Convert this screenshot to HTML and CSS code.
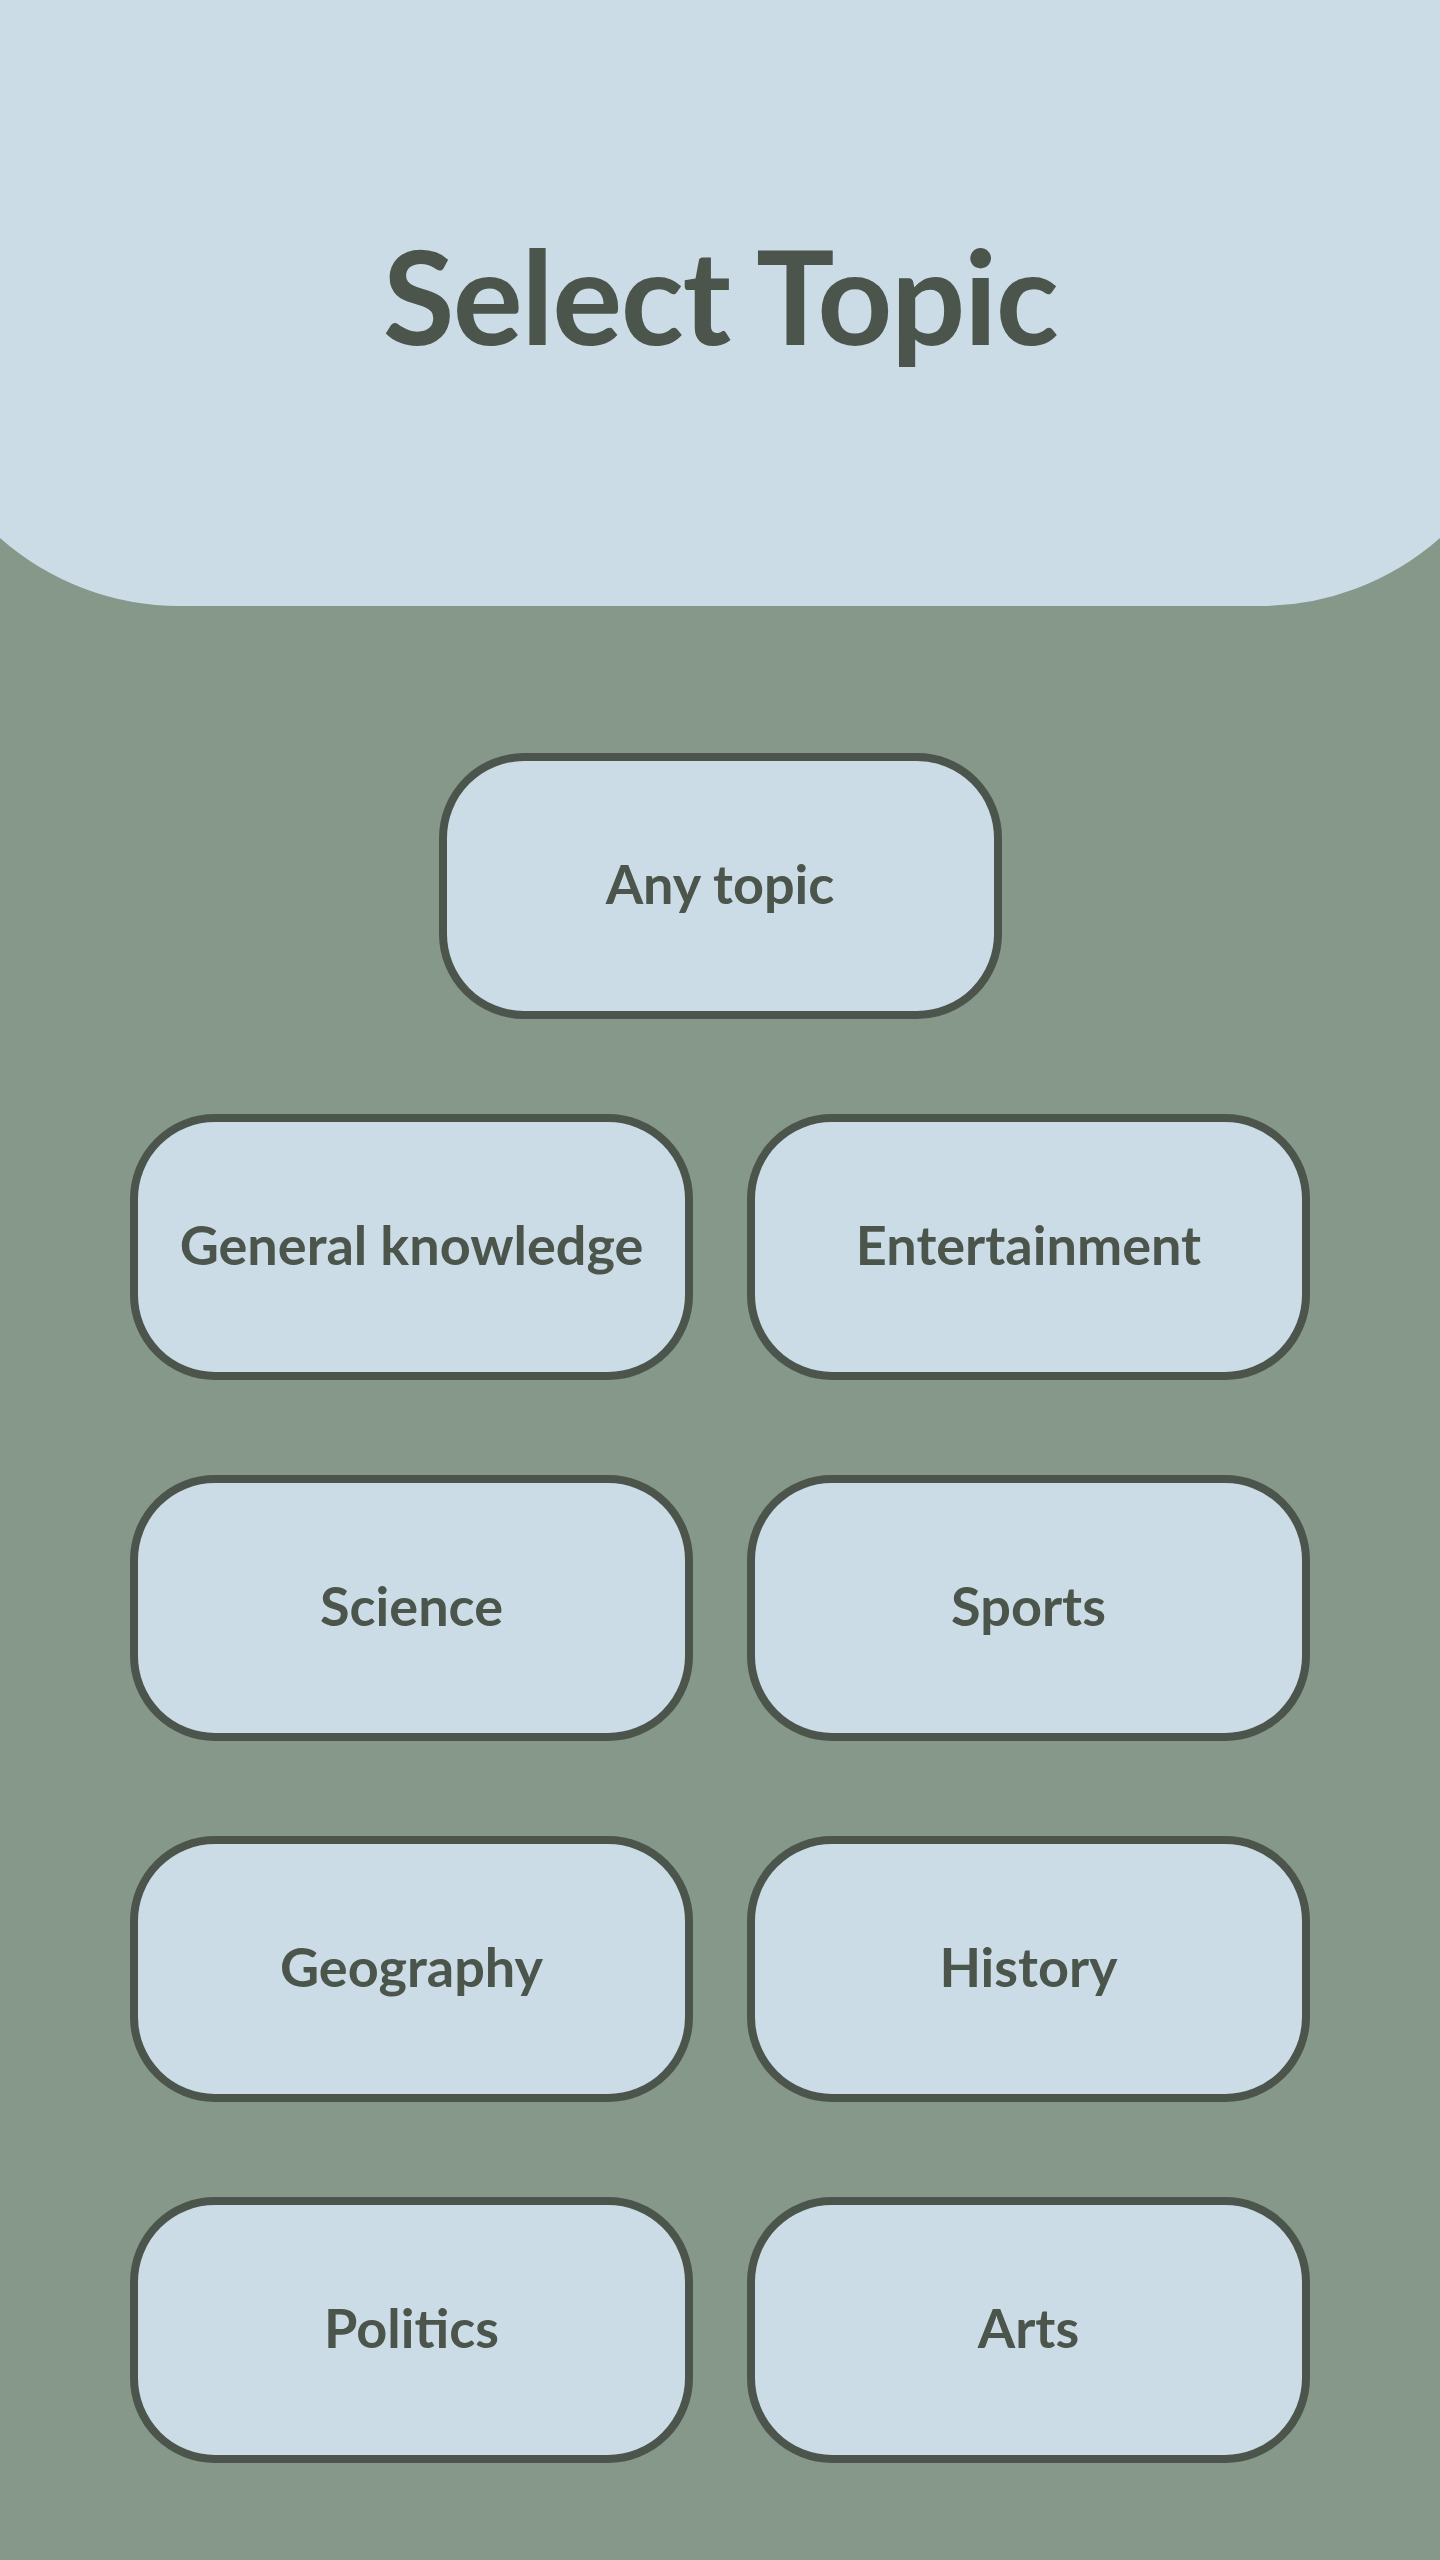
FILE: index.html
```html
<!DOCTYPE html>
<html lang="en">
<head>
<meta charset="utf-8">
<title>Select Topic</title>
<link rel="stylesheet" href="styles.css">
</head>
<body>
<header class="hero">
  <h1 class="hero-title">Select Topic</h1>
</header>
<main class="topics">
  <button class="topic topic-any">Any topic</button>
  <div class="topic-grid">
    <button class="topic">General knowledge</button>
    <button class="topic">Entertainment</button>
    <button class="topic">Science</button>
    <button class="topic">Sports</button>
    <button class="topic">Geography</button>
    <button class="topic">History</button>
    <button class="topic">Politics</button>
    <button class="topic">Arts</button>
  </div>
</main>
</body>
</html>
```
FILE: styles.css
```css
html, body {
  margin: 0;
  padding: 0;
}
body {
  background: #86988a;
  font-family: Lato, "Open Sans", "Liberation Sans", sans-serif;
  color: #4b554c;
  min-height: 2560px;
}
.hero {
  box-sizing: border-box;
  width: 1440px;
  height: 606px;
  padding-top: 229px;
  background: #cbdce6;
  clip-path: path("M0,0 H1440 V538 A272,272 0 0 1 1260,606 H180 A272,272 0 0 1 0,538 Z");
  text-align: center;
}
.hero-title {
  margin: 0;
  font-size: 131px;
  line-height: 1;
  font-weight: 700;
  letter-spacing: -1.5px;
  color: #4b554c;
}
.topics {
  display: flex;
  flex-direction: column;
  align-items: center;
  gap: 95px;
  padding-top: 147px;
}
.topic-grid {
  display: grid;
  grid-template-columns: 563px 563px;
  column-gap: 54px;
  row-gap: 95px;
}
.topic {
  box-sizing: border-box;
  width: 563px;
  height: 266px;
  margin: 0;
  padding: 0 0 6px;
  display: flex;
  align-items: center;
  justify-content: center;
  background: #cbdce6;
  border: 8px solid #4b554c;
  border-radius: 85px;
  font-family: Lato, "Open Sans", "Liberation Sans", sans-serif;
  font-size: 54px;
  font-weight: 700;
  color: #4b554c;
  cursor: pointer;
}
```
